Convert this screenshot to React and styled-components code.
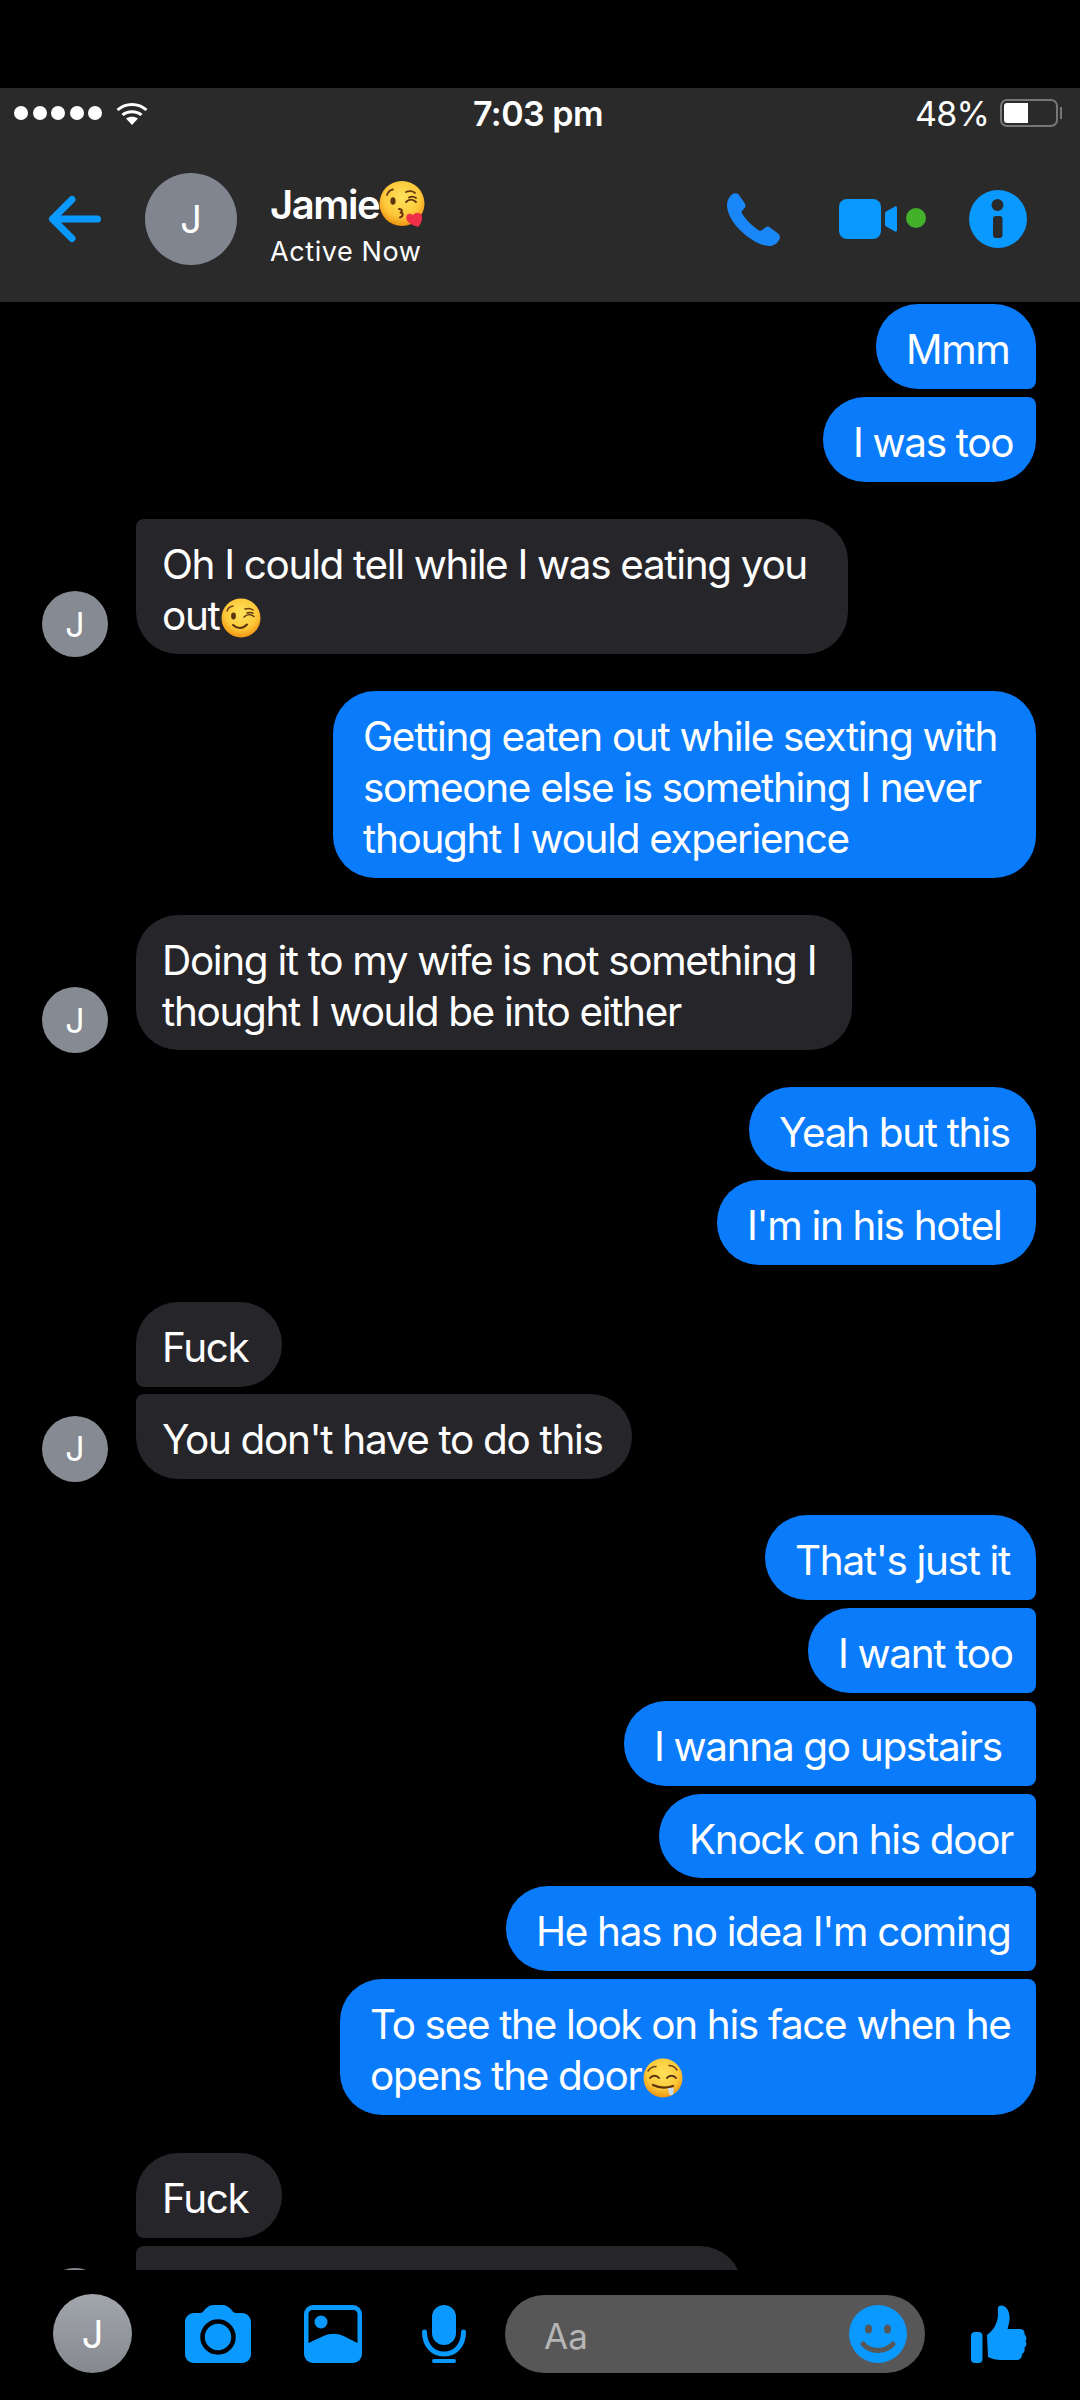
import React from 'react';
import styled, { createGlobalStyle } from 'styled-components';

const BLUE = '#0a99ff';
const FONT = `Inter, 'Noto Sans', sans-serif`;

const GlobalStyle = createGlobalStyle`
  html, body {
    margin: 0;
    padding: 0;
    background: #000;
  }
`;

const Page = styled.div`
  display: flex;
  flex-direction: column;
  width: 1080px;
  height: 2400px;
  padding-top: 88px;
  box-sizing: border-box;
  overflow: hidden;
  background: #000;
  color: #fff;
  font-family: ${FONT};
`;

const Header = styled.header`
  flex: none;
  height: 214px;
  background: #2a2a2a;
`;

const StatusBar = styled.div`
  display: grid;
  grid-template-columns: 1fr auto 1fr;
  align-items: center;
  height: 50px;
  padding: 0 18px 0 14px;
`;

const StatusLeft = styled.div`
  display: flex;
  align-items: center;
`;

const Signal = styled.span`
  width: 14px;
  height: 14px;
  margin-right: 4.5px;
  border-radius: 50%;
  background: #fff;
`;

const WifiIcon = styled.svg`
  width: 32px;
  height: 23px;
  margin-left: 9px;
`;

const Clock = styled.div`
  font-size: 34px;
  font-weight: 600;
  letter-spacing: -0.5px;
`;

const StatusRight = styled.div`
  display: flex;
  align-items: center;
  justify-content: flex-end;
`;

const Percent = styled.span`
  font-size: 34px;
  letter-spacing: -0.8px;
  margin-right: 11px;
`;

const Battery = styled.div`
  position: relative;
  box-sizing: border-box;
  width: 58px;
  height: 28px;
  padding: 2px;
  border: 2px solid #777;
  border-radius: 7px;
  margin-right: 4px;

  &::after {
    content: '';
    position: absolute;
    top: 6px;
    right: -6px;
    width: 2px;
    height: 12px;
    background: #777;
  }
`;

const BatteryFill = styled.div`
  height: 100%;
  border-radius: 3px 0 0 3px;
  background: #fff;
`;

const NavBar = styled.nav`
  display: flex;
  align-items: center;
  height: 162px;
  padding: 0 53px 0 48px;
`;

const BackIcon = styled.svg`
  width: 53px;
  height: 48px;
  flex: none;
`;

const HeaderAvatar = styled.div`
  display: flex;
  align-items: center;
  justify-content: center;
  width: 92px;
  height: 92px;
  margin-left: 44px;
  flex: none;
  border-radius: 50%;
  background: #808590;
  font-size: 38px;
`;

const Contact = styled.div`
  flex: 1;
  margin-left: 33px;
  padding-top: 10px;
`;

const ContactName = styled.div`
  display: flex;
  align-items: center;
  height: 50px;
  font-size: 40px;
  font-weight: 600;
  letter-spacing: -1.4px;
`;

const ContactStatus = styled.div`
  margin-top: 6px;
  font-size: 27px;
  letter-spacing: 0.6px;
  line-height: 34px;
`;

const NavIcon = styled.svg`
  flex: none;
  margin-left: ${(props) => props.$left || 0}px;
`;

const Messages = styled.main`
  flex: none;
  display: flex;
  flex-direction: column;
  height: 1968px;
  padding-top: 2px;
  box-sizing: border-box;
  overflow: hidden;
`;

const Row = styled.div`
  display: flex;
  flex: none;
  align-items: flex-end;
  justify-content: ${(props) => (props.$mine ? 'flex-end' : 'flex-start')};
  padding: ${(props) => (props.$mine ? '0 44px 0 0' : '0 0 0 42px')};
  margin-top: ${(props) => props.$gap}px;
`;

const Avatar = styled.div`
  display: flex;
  align-items: center;
  justify-content: center;
  flex: none;
  width: 66px;
  height: 66px;
  margin: 0 28px -3px 0;
  border-radius: 50%;
  background: ${(props) => (props.$blank ? 'transparent' : '#868a93')};
  font-size: 34px;
`;

const Bubble = styled.div`
  box-sizing: border-box;
  flex: none;
  width: ${(props) => props.$width}px;
  min-height: 84.8px;
  padding: 20px 0 13.8px ${(props) => (props.$mine ? 30 : 26)}px;
  background: ${(props) => (props.$mine ? '#0a7bfb' : '#26252a')};
  border-radius: ${(props) => props.$corners};
  font-size: 40.5px;
  letter-spacing: -1.35px;
  line-height: 51px;
  white-space: nowrap;
`;

const Emoji = styled.svg`
  display: inline-block;
  flex: none;
  vertical-align: ${(props) => props.$drop || -8}px;
  margin-left: ${(props) => props.$left || 0}px;
`;

const Composer = styled.footer`
  flex: none;
  display: flex;
  align-items: center;
  height: 115px;
  padding: 12px 0 0 53px;
  box-sizing: border-box;
`;

const ComposerAvatar = styled.div`
  display: flex;
  align-items: center;
  justify-content: center;
  flex: none;
  width: 79px;
  height: 79px;
  border-radius: 50%;
  background: linear-gradient(#a2a6ad, #85888f);
  font-size: 38px;
`;

const ToolIcon = styled.svg`
  flex: none;
  margin-left: ${(props) => props.$left}px;
`;

const InputBox = styled.div`
  display: flex;
  align-items: center;
  justify-content: space-between;
  box-sizing: border-box;
  width: 420px;
  height: 78px;
  margin-left: 39px;
  padding: 0 18px 0 39px;
  border-radius: 39px;
  background: #575757;
`;

const Placeholder = styled.span`
  padding-top: 4px;
  font-size: 35px;
  color: #b5b5b5;
`;

const R = 42;
const r = 8;

const corners = (mine, first, last) => {
  const top = first ? R : r;
  const bottom = last ? R : r;
  return mine
    ? `${R}px ${top}px ${bottom}px ${R}px`
    : `${top}px ${R}px ${R}px ${bottom}px`;
};

const FaceGradient = ({ id }) => (
  <radialGradient id={id} cx="50%" cy="38%" r="62%">
    <stop offset="0%" stopColor="#ffe25c" />
    <stop offset="65%" stopColor="#fdc93a" />
    <stop offset="100%" stopColor="#ef9412" />
  </radialGradient>
);

const KissEmoji = () => (
  <Emoji width="48" height="48" viewBox="0 0 48 48" $left={0}>
    <defs>
      <FaceGradient id="kiss-face" />
    </defs>
    <circle cx="23" cy="23.5" r="22.5" fill="url(#kiss-face)" />
    <path d="M8 15c1-3 3-5 6-5.500M27 12c3-1.500 7-1 9 1" fill="none" stroke="#6b3d10" strokeWidth="1.800" strokeLinecap="round" />
    <ellipse cx="14" cy="21" rx="2.600" ry="3.800" fill="#5c3410" />
    <path d="M27 22c3-3 7-3 10 0M30 17.500c2-1 5-1 7 .5" fill="none" stroke="#5c3410" strokeWidth="1.800" strokeLinecap="round" />
    <path d="M20 29c3 0 4 2 1.500 3.500 3 .5 3 4-.5 5" fill="none" stroke="#6b3010" strokeWidth="2" strokeLinecap="round" strokeLinejoin="round" />
    <path d="M38 47c-7-3-11-8-10-12 .6-3 5-4 7-.5 2-3 8-2 8.500 2 .5 4-2 7-5.500 10.500z" transform="rotate(-12 38 40)" fill="#f0304a" />
  </Emoji>
);

const WinkEmoji = () => (
  <Emoji width="40" height="40" viewBox="0 0 40 40" $drop={-8} $left={2}>
    <defs>
      <FaceGradient id="wink-face" />
    </defs>
    <circle cx="20" cy="20" r="19.500" fill="url(#wink-face)" />
    <path d="M6 13c1-3 3-4.500 6-5M24 11c3-1 6-.5 8 1" fill="none" stroke="#6b3d10" strokeWidth="1.500" strokeLinecap="round" />
    <ellipse cx="12.500" cy="18" rx="2.400" ry="3.400" fill="#5c3410" />
    <path d="M23 19c3-3 7-3 10-.5M26 15c2-.8 4-.8 6 .2" fill="none" stroke="#5c3410" strokeWidth="1.500" strokeLinecap="round" />
    <path d="M12 27c4 4 10 4 14-.5" fill="none" stroke="#5c3410" strokeWidth="2" strokeLinecap="round" />
  </Emoji>
);

const DroolEmoji = () => (
  <Emoji width="40" height="40" viewBox="0 0 40 40" $drop={-8} $left={2}>
    <defs>
      <FaceGradient id="drool-face" />
    </defs>
    <circle cx="20" cy="20" r="19.500" fill="url(#drool-face)" />
    <path d="M5 13c2-3 5-4.500 8-4.500M26 7.500c3 0 6 1.500 8 4.500" fill="none" stroke="#6b3d10" strokeWidth="1.500" strokeLinecap="round" />
    <path d="M7 20c2-3 7-3 9 0M24 20c2-3 7-3 9 0" fill="none" stroke="#5c3410" strokeWidth="2" strokeLinecap="round" />
    <path d="M10 27c6 3 14 3 20 1" fill="none" stroke="#5c3410" strokeWidth="2.200" strokeLinecap="round" />
    <path d="M25 30h5.500v5.500c-1 2.500-4 2-4.500 0z" fill="#c9dcec" />
  </Emoji>
);

const MESSAGES = [
  { mine: true, gap: 0, width: 160, first: true, last: false, lines: ['Mmm'] },
  { mine: true, gap: 8, width: 213, first: false, last: true, lines: ['I was too'] },
  { gap: 37, width: 712, initial: 'J', first: false, last: true, lines: ['Oh I could tell while I was eating you', <>out<WinkEmoji /></>] },
  { mine: true, gap: 36.5, width: 703, first: true, last: true, lines: ['Getting eaten out while sexting with', 'someone else is something I never', 'thought I would experience'] },
  { gap: 37, width: 716, initial: 'J', first: true, last: true, lines: ['Doing it to my wife is not something I', 'thought I would be into either'] },
  { mine: true, gap: 36.5, width: 287, first: true, last: false, lines: ['Yeah but this'] },
  { mine: true, gap: 8, width: 319, first: false, last: true, lines: ["I'm in his hotel"] },
  { gap: 37.5, width: 146, blank: true, first: true, last: false, lines: ['Fuck'] },
  { gap: 7, width: 496, initial: 'J', first: false, last: true, lines: ["You don't have to do this"] },
  { mine: true, gap: 36.5, width: 271, first: true, last: false, lines: ["That's just it"] },
  { mine: true, gap: 8, width: 228, first: false, last: false, lines: ['I want too'] },
  { mine: true, gap: 8, width: 412, first: false, last: false, lines: ['I wanna go upstairs'] },
  { mine: true, gap: 8, width: 377, first: false, last: false, lines: ['Knock on his door'] },
  { mine: true, gap: 8, width: 530, first: false, last: false, lines: ["He has no idea I'm coming"] },
  { mine: true, gap: 8, width: 696, first: false, last: true, lines: ['To see the look on his face when he', <>opens the door<DroolEmoji /></>] },
  { gap: 38, width: 146, blank: true, first: true, last: false, lines: ['Fuck'] },
  // the list is cut here, only the top of this bubble and its avatar show
  { gap: 8, width: 606, first: false, last: true, lines: ['\u00a0'] },
];

const MessageRow = ({ message }) => {
  const { mine, gap, width, initial, blank, first, last, lines } = message;
  return (
    <Row $mine={mine} $gap={gap}>
      {!mine && <Avatar $blank={blank}>{initial}</Avatar>}
      <Bubble $mine={mine} $width={width} $corners={corners(mine, first, last)}>
        {lines.map((line, index) => (
          <div key={index}>{line}</div>
        ))}
      </Bubble>
    </Row>
  );
};

export default function App() {
  return (
    <Page>
      <GlobalStyle />
      <Header>
        <StatusBar>
          <StatusLeft>
            {[0, 1, 2, 3, 4].map((dot) => (
              <Signal key={dot} />
            ))}
            <WifiIcon viewBox="0 0 32 23">
              <path d="M1.500 8C9.500 .5 22.500 .5 30.500 8" fill="none" stroke="#fff" strokeWidth="3" />
              <path d="M6.500 13c5-4.500 14-4.500 19 0" fill="none" stroke="#fff" strokeWidth="3" />
              <path d="M16 23l-6-6.500c3.500-2.500 8.500-2.500 12 0z" fill="#fff" />
            </WifiIcon>
          </StatusLeft>
          <Clock>7:03 pm</Clock>
          <StatusRight>
            <Percent>48%</Percent>
            <Battery>
              <BatteryFill style={{ width: '48%' }} />
            </Battery>
          </StatusRight>
        </StatusBar>
        <NavBar>
          <BackIcon viewBox="0 0 53 48">
            <path d="M49.500 24H4.500M24 4.500L4.500 24 24 43.500" fill="none" stroke={BLUE} strokeWidth="7" strokeLinecap="round" strokeLinejoin="round" />
          </BackIcon>
          <HeaderAvatar>J</HeaderAvatar>
          <Contact>
            <ContactName>
              Jamie
              <KissEmoji />
            </ContactName>
            <ContactStatus>Active Now</ContactStatus>
          </Contact>
          <NavIcon width="53" height="53" viewBox="0 0 53 53">
            <path d="M5 1.500C7.500-.5 10.500 0 12 2l5.500 8c1.500 2 1.500 3.500 0 5L15 18c-.5.7-.5 1.500 0 2.500C19 27 25 33 32 37.500c1 .5 2 .5 3-.5l3.500-2.500c1.500-1.200 3-1.200 4.500 0l8 6c2 1.500 2.500 4 1 6.500-2 3.500-5 6-10 6-9-.5-20-7-29-16C4 28 0 19 0 12c0-4.500 2-8 5-10.500z" fill="#1a87f8" />
          </NavIcon>
          <NavIcon width="87" height="40" viewBox="0 0 87 40" $left={59}>
            <rect x="0" y="0" width="42" height="40" rx="8" fill={BLUE} />
            <path d="M46 14.500c0-1 .5-1.500 1.500-2.200L56 7.500c1-.5 2 .2 2 1.500v22c0 1.300-1 2-2 1.500l-8.500-4.800c-1-.7-1.500-1.200-1.500-2.200z" fill={BLUE} />
            <circle cx="77" cy="19" r="10" fill="#43b02a" />
          </NavIcon>
          <NavIcon width="58" height="58" viewBox="0 0 58 58" $left={43}>
            <circle cx="29" cy="29" r="29" fill={BLUE} />
            <circle cx="28.500" cy="15" r="6" fill="#2a2a2a" />
            <rect x="24" y="26" width="9.500" height="22" rx="3" fill="#2a2a2a" />
          </NavIcon>
        </NavBar>
      </Header>
      <Messages>
        {MESSAGES.map((message, index) => (
          <MessageRow key={index} message={message} />
        ))}
      </Messages>
      <Composer>
        <ComposerAvatar>J</ComposerAvatar>
        <ToolIcon width="66" height="58" viewBox="0 0 66 58" $left={53}>
          <path d="M9 8h6c2 0 3-1 4-2.500C21.500 2 25 0 29 0h8c4 0 7.500 2 10 5.500C48 7 49 8 51 8h6c5 0 9 4 9 9v32c0 5-4 9-9 9H9c-5 0-9-4-9-9V17c0-5 4-9 9-9z" fill={BLUE} />
          <circle cx="33" cy="32" r="15.500" fill="none" stroke="#000" strokeWidth="4.500" />
        </ToolIcon>
        <ToolIcon width="58" height="58" viewBox="0 0 58 58" $left={53}>
          <rect width="58" height="58" rx="9" fill={BLUE} />
          <path d="M4.500 38V9c0-2.300 1.700-4 4-4h41c2.300 0 4 1.700 4 4v29l-14-7c-7-3-13-3-20 0z" fill="#000" />
          <circle cx="17" cy="17" r="6.500" fill={BLUE} />
        </ToolIcon>
        <ToolIcon width="44" height="58" viewBox="0 0 44 58" $left={60}>
          <rect x="10" y="0" width="24" height="40" rx="12" fill={BLUE} />
          <path d="M2.500 27c0 13 8 22 19.500 22s19.500-9 19.500-22" fill="none" stroke={BLUE} strokeWidth="5" strokeLinecap="round" />
          <rect x="10" y="54" width="24" height="4" rx="2" fill={BLUE} />
        </ToolIcon>
        <InputBox>
          <Placeholder>Aa</Placeholder>
          <svg width="58" height="58" viewBox="0 0 58 58">
            <circle cx="29" cy="29" r="29" fill={BLUE} />
            <ellipse cx="19.500" cy="24" rx="3.500" ry="4.500" fill="#575757" />
            <ellipse cx="38.500" cy="24" rx="3.500" ry="4.500" fill="#575757" />
            <path d="M14 39c8 8.500 22 8.500 30 0" fill="none" stroke="#575757" strokeWidth="5" strokeLinecap="round" />
          </svg>
        </InputBox>
        <ToolIcon width="56" height="58" viewBox="0 0 56 58" $left={46}>
          <rect x="0" y="27" width="11.500" height="31" rx="4" fill={BLUE} />
          <path d="M28 1c4-2 10 2 10.500 10 .5 5-1 9-2 13H49c3 0 5 2 4.500 5.500 2 1.500 2.500 4.500 1 6.500 1.500 2 1 5-1 6.500.5 3.500-.5 5.500-2.500 6.500 0 4-2 6-6 6H30c-5 0-9-1-13-3l-1-22c6-4 11-12 11-21 0-4-.5-7 1-8z" fill={BLUE} />
        </ToolIcon>
      </Composer>
    </Page>
  );
}
